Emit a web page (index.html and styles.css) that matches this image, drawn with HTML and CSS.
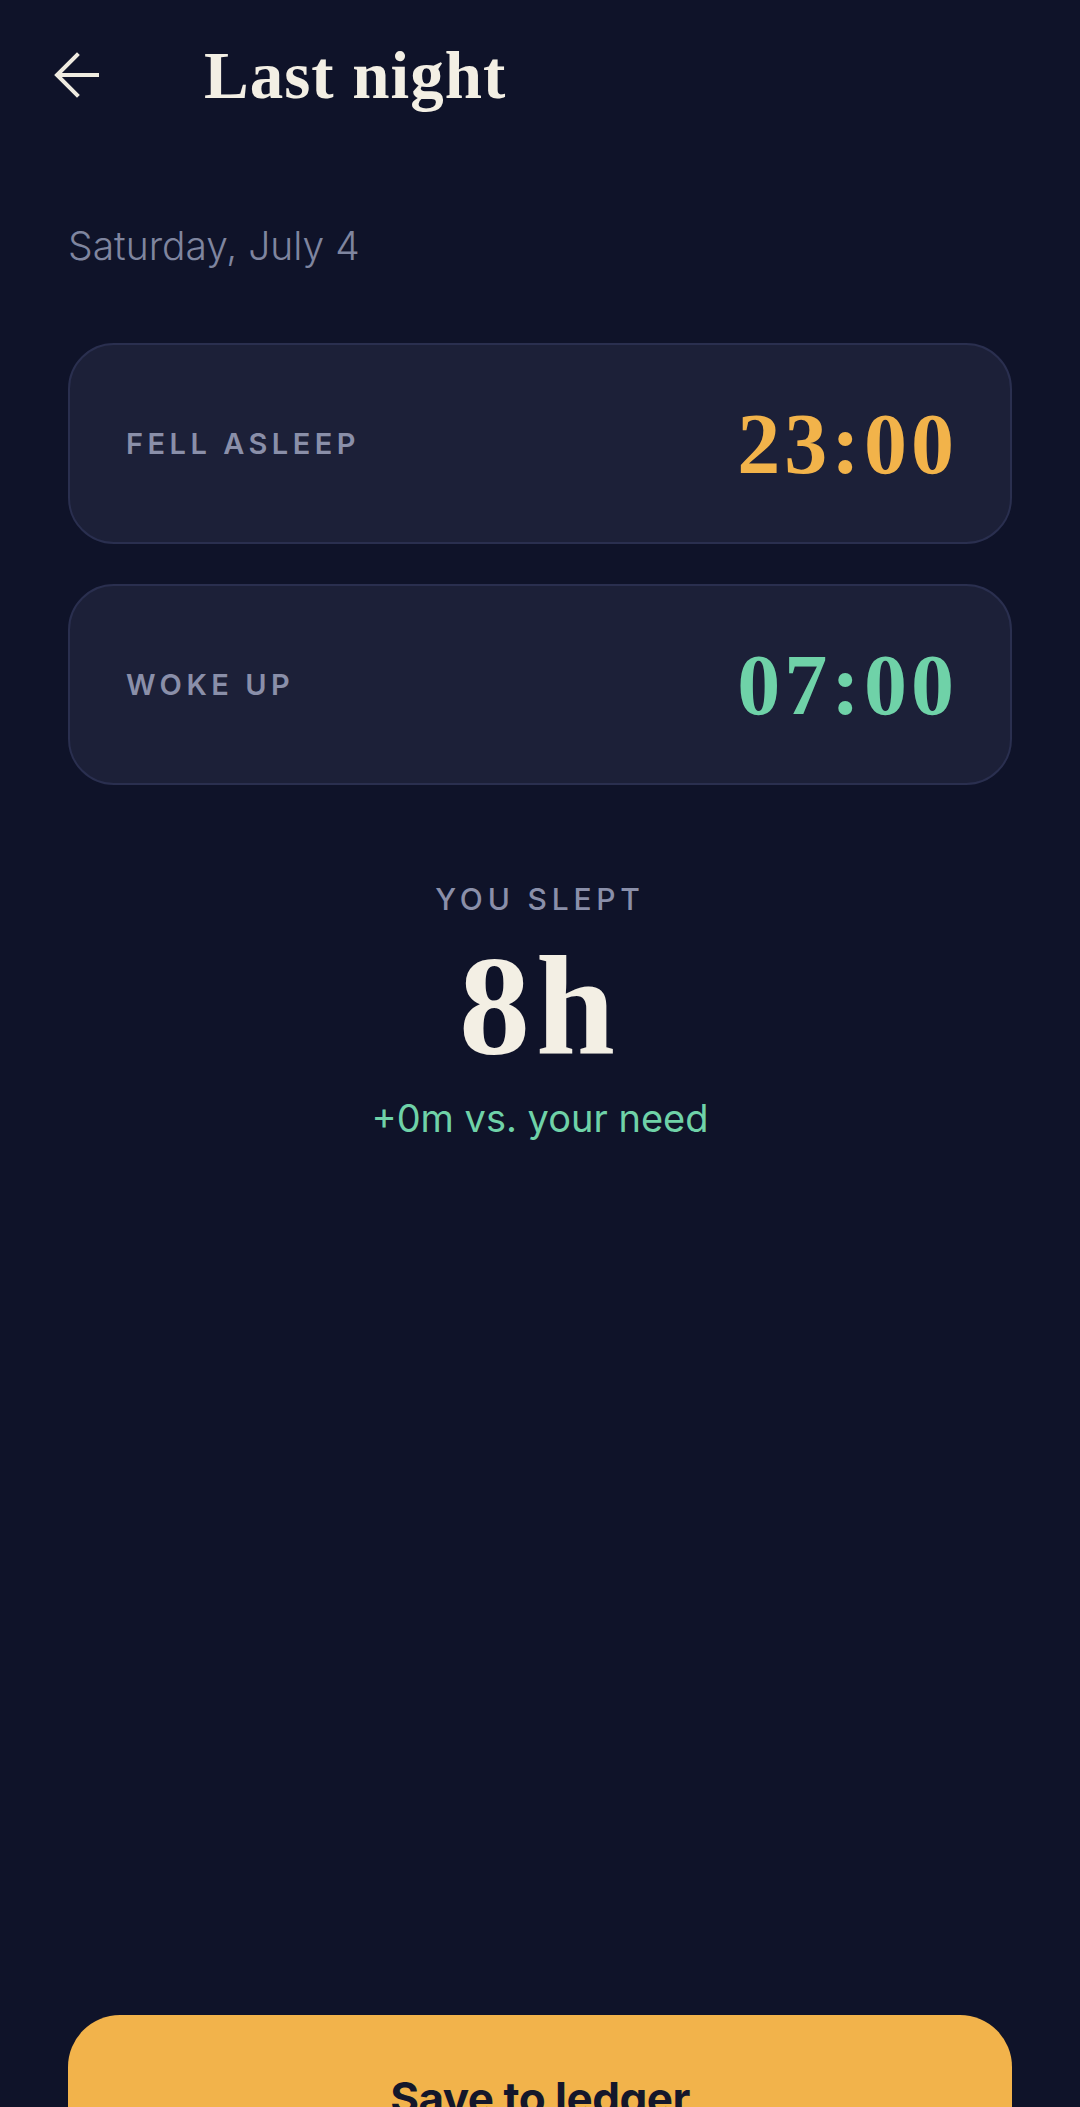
FILE: index.html
```html
<!DOCTYPE html>
<html lang="en">

<head>
    <meta charset="UTF-8">
    <meta name="viewport" content="width=device-width, initial-scale=1.0">
    <title>Last night</title>
    <link rel="stylesheet" href="styles.css">
</head>

<body>
    <div class="screen">
        <header class="top-bar">
            <button type="button" class="back-button" aria-label="Back">
                <svg width="46" height="46" viewBox="0 0 46 46" fill="none" stroke="#efebe0" stroke-width="4" stroke-linecap="square">
                    <path d="M43 23H4" />
                    <path d="M23 3L3 23L23 43" />
                </svg>
            </button>
            <h1>Last night</h1>
        </header>

        <div class="content">
            <p class="date">Saturday, July 4</p>

            <div class="time-card">
                <span class="time-label">FELL ASLEEP</span>
                <span class="time-value asleep">23:00</span>
            </div>
            <div class="time-card">
                <span class="time-label">WOKE UP</span>
                <span class="time-value woke">07:00</span>
            </div>

            <div class="summary">
                <p class="summary-label">YOU SLEPT</p>
                <p class="summary-hours">8h</p>
                <p class="summary-diff">+0m vs. your need</p>
            </div>
        </div>

        <div class="footer">
            <button type="button" class="save-button">Save to ledger</button>
        </div>
    </div>
</body>

</html>
```

FILE: styles.css
```css
html,
body {
    margin: 0;
    padding: 0;
    background-color: #0f1329;
    overflow: hidden;
}

body {
    font-family: Inter, "Noto Sans", sans-serif;
    color: #efebe0;
}

.screen {
    height: 2181px;
    display: flex;
    flex-direction: column;
}

.top-bar {
    display: flex;
    align-items: center;
    height: 90px;
    padding: 30px 0 0 54px;
}

.back-button {
    width: 46px;
    height: 46px;
    padding: 0;
    border: none;
    background: none;
    display: flex;
    cursor: pointer;
}

.top-bar h1 {
    margin: 0 0 0 104px;
    font-family: "Liberation Serif", "DejaVu Serif", serif;
    font-weight: bold;
    font-size: 67px;
    letter-spacing: 1px;
    line-height: 1;
    color: #f3efe4;
}

.content {
    padding: 0 68px;
}

.date {
    margin: 103px 0 0;
    font-size: 39px;
    line-height: 46px;
    font-weight: 300;
    color: #7f859f;
}

.time-card {
    display: flex;
    align-items: center;
    justify-content: space-between;
    box-sizing: border-box;
    height: 201px;
    padding: 0 52px 0 56px;
    margin-top: 40px;
    background-color: #1c2038;
    border: 2px solid #2a2f4f;
    border-radius: 46px;
}

.date + .time-card {
    margin-top: 74px;
}

.time-label {
    font-size: 29px;
    font-weight: 600;
    letter-spacing: 0.155em;
    color: #8a8fa9;
}

.time-value {
    font-family: "Liberation Serif", "DejaVu Serif", serif;
    font-weight: bold;
    font-size: 86px;
    letter-spacing: 4px;
    line-height: 1;
}

.asleep {
    color: #f2b34a;
}

.woke {
    color: #6fd2a8;
}

.summary {
    text-align: center;
}

.summary-label {
    margin: 96px 0 0;
    font-size: 30px;
    line-height: 36px;
    font-weight: 500;
    letter-spacing: 0.16em;
    color: #8a8fa9;
}

.summary-hours {
    margin: 19px 0 0;
    font-family: "Liberation Serif", "DejaVu Serif", serif;
    font-weight: bold;
    font-size: 142px;
    line-height: 140px;
    letter-spacing: 6px;
    color: #f3efe4;
}

.summary-diff {
    margin: 20px 0 0;
    font-size: 38px;
    line-height: 44px;
    color: #6fd2a8;
}

.footer {
    margin-top: auto;
    padding: 0 68px;
}

.save-button {
    display: block;
    width: 100%;
    height: 166px;
    border: none;
    border-radius: 52px;
    background-color: #f2b34b;
    font-family: Inter, "Noto Sans", sans-serif;
    font-size: 44px;
    font-weight: bold;
    letter-spacing: -0.5px;
    color: #14172b;
    cursor: pointer;
}
```
